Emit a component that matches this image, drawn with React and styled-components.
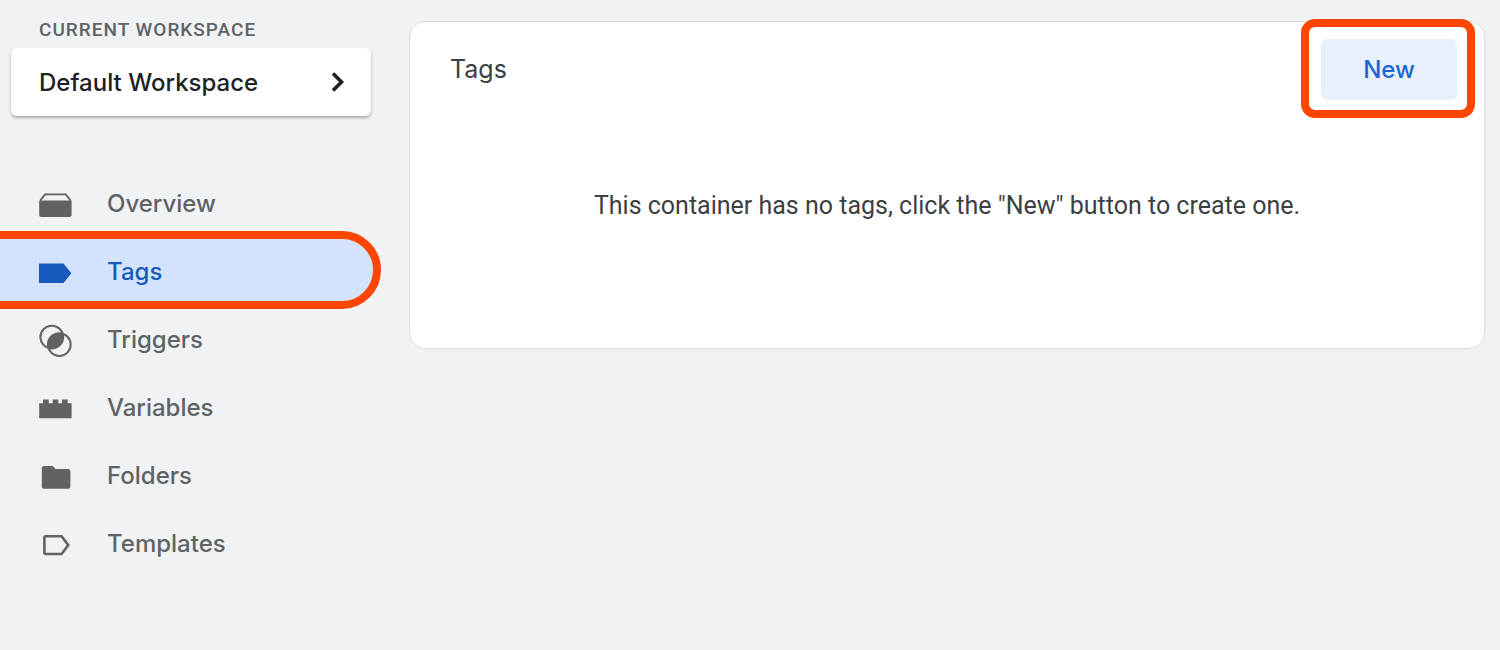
import styled, { createGlobalStyle } from 'styled-components';

const GlobalStyle = createGlobalStyle`
  * {
    box-sizing: border-box;
  }
  body {
    margin: 0;
    background: #f0f2f4;
    font-family: Inter, 'Liberation Sans', sans-serif;
    color: #5f6366;
  }
`;

const Layout = styled.div`
  display: flex;
  align-items: flex-start;
  min-height: 100vh;
`;

const Sidebar = styled.aside`
  flex: 0 0 373px;
`;

const WorkspaceLabel = styled.p`
  margin: 0;
  padding: 18px 0 6px 39px;
  font-family: Roboto, sans-serif;
  font-size: 19px;
  font-weight: 500;
  line-height: 24px;
  letter-spacing: 1px;
  text-transform: uppercase;
`;

const WorkspaceButton = styled.button`
  display: flex;
  align-items: center;
  justify-content: space-between;
  width: 360px;
  height: 68px;
  margin-left: 11px;
  padding: 0 25px 0 28px;
  border: 0;
  border-radius: 6px;
  background: #fff;
  box-shadow: 0 2px 3px rgba(60, 64, 67, 0.4);
  color: #202124;
  font-family: inherit;
  font-size: 24px;
  font-weight: 500;
`;

const NavList = styled.ul`
  display: flex;
  flex-direction: column;
  gap: 6px;
  margin: 55px 0 0;
  padding: 0;
  list-style: none;
`;

const NavLink = styled.a`
  display: flex;
  align-items: center;
  gap: 33px;
  height: 62px;
  padding: 4px 0 0 38px;
  border-radius: 0 31px 31px 0;
  background: ${({ $active }) => ($active ? '#d3e3fd' : 'transparent')};
  outline: ${({ $active }) => ($active ? '8px solid #ff4500' : 'none')};
  color: ${({ $active }) => ($active ? '#185abc' : '#5f6366')};
  font-size: 24px;
  font-weight: 500;
  line-height: 32px;
  text-decoration: none;
`;

const Main = styled.main`
  flex: 1;
  padding: 21px 15px 21px 36px;
`;

const Card = styled.section`
  min-height: 328px;
  padding: 17px 27px 0 40px;
  border: 1px solid #dadce0;
  border-radius: 16px;
  background: #fff;
`;

const CardHeader = styled.header`
  display: flex;
  justify-content: space-between;
`;

const Title = styled.h1`
  margin: 0;
  font-size: 25px;
  font-weight: 400;
  line-height: 60px;
  color: #3c4043;
`;

const NewButton = styled.button`
  position: relative;
  width: 136px;
  height: 61px;
  border: 0;
  border-radius: 6px;
  background: #e9f0fd;
  color: #1967d2;
  font-family: inherit;
  font-size: 24px;
  font-weight: 500;

  &::after {
    content: '';
    position: absolute;
    inset: -20px -18px -18px -20px;
    border: 8px solid #ff4500;
    border-radius: 14px;
  }
`;

const EmptyMessage = styled.p`
  margin: 90px 13px 0 0;
  font-family: Roboto, sans-serif;
  font-size: 25px;
  line-height: 32px;
  text-align: center;
  color: #3c4043;
`;

function NavIcon({ children }) {
  return (
    <svg width="36" height="36" viewBox="0 0 36 36" fill="currentColor" aria-hidden="true">
      {children}
    </svg>
  );
}

const items = [
  {
    label: 'Overview',
    icon: (
      <>
        <path d="M2.2 14.6 7 8.4h20.8l4.8 6.2" fill="none" stroke="currentColor" strokeWidth="1.8" />
        <path d="M1.2 14.6h32.4V29a2 2 0 0 1-2 2H3.2a2 2 0 0 1-2-2z" />
      </>
    ),
  },
  {
    label: 'Tags',
    active: true,
    icon: <path d="M1 9.6h24.5L33.4 19.3 25.5 29H1z" />,
  },
  {
    label: 'Triggers',
    icon: (
      <>
        <g fill="none" stroke="currentColor" strokeWidth="2">
          <circle cx="13.8" cy="15.1" r="11.4" />
          <circle cx="21.3" cy="22.6" r="11.4" />
        </g>
        <path d="M24.7 11.7A11.4 11.4 0 0 0 10.4 26 11.4 11.4 0 0 0 24.7 11.7z" />
      </>
    ),
  },
  {
    label: 'Variables',
    icon: <path d="M1.2 13.3H5V9.4h5.7v3.9h4V9.4h5.6v3.9H24V9.4h5.7v3.9h3.9v15H1.2z" />,
  },
  {
    label: 'Folders',
    icon: (
      <path d="M6 8h8.6l3 3h12.6a2.2 2.2 0 0 1 2.2 2.2v15.4a2.2 2.2 0 0 1-2.2 2.2H6a2.2 2.2 0 0 1-2.2-2.2V10.2A2.2 2.2 0 0 1 6 8z" />
    ),
  },
  {
    label: 'Templates',
    icon: (
      <path
        d="M7.6 10.2h16l6.7 8.9-6.7 8.9h-16a1.2 1.2 0 0 1-1.2-1.2V11.4a1.2 1.2 0 0 1 1.2-1.2z"
        fill="none"
        stroke="currentColor"
        strokeWidth="2.6"
      />
    ),
  },
];

export default function App() {
  return (
    <>
      <GlobalStyle />
      <Layout>
        <Sidebar>
          <WorkspaceLabel>Current Workspace</WorkspaceLabel>
          <WorkspaceButton type="button">
            Default Workspace
            <svg width="16" height="24" viewBox="0 0 16 24" fill="none" aria-hidden="true">
              <path d="M3 3.5 11.5 12 3 20.5" stroke="#202124" strokeWidth="3.6" />
            </svg>
          </WorkspaceButton>
          <nav>
            <NavList>
              {items.map(({ label, icon, active }) => (
                <li key={label}>
                  <NavLink href="#" $active={active} aria-current={active ? 'page' : undefined}>
                    <NavIcon>{icon}</NavIcon>
                    {label}
                  </NavLink>
                </li>
              ))}
            </NavList>
          </nav>
        </Sidebar>
        <Main>
          <Card>
            <CardHeader>
              <Title>Tags</Title>
              <NewButton type="button">New</NewButton>
            </CardHeader>
            <EmptyMessage>
              This container has no tags, click the "New" button to create one.
            </EmptyMessage>
          </Card>
        </Main>
      </Layout>
    </>
  );
}
